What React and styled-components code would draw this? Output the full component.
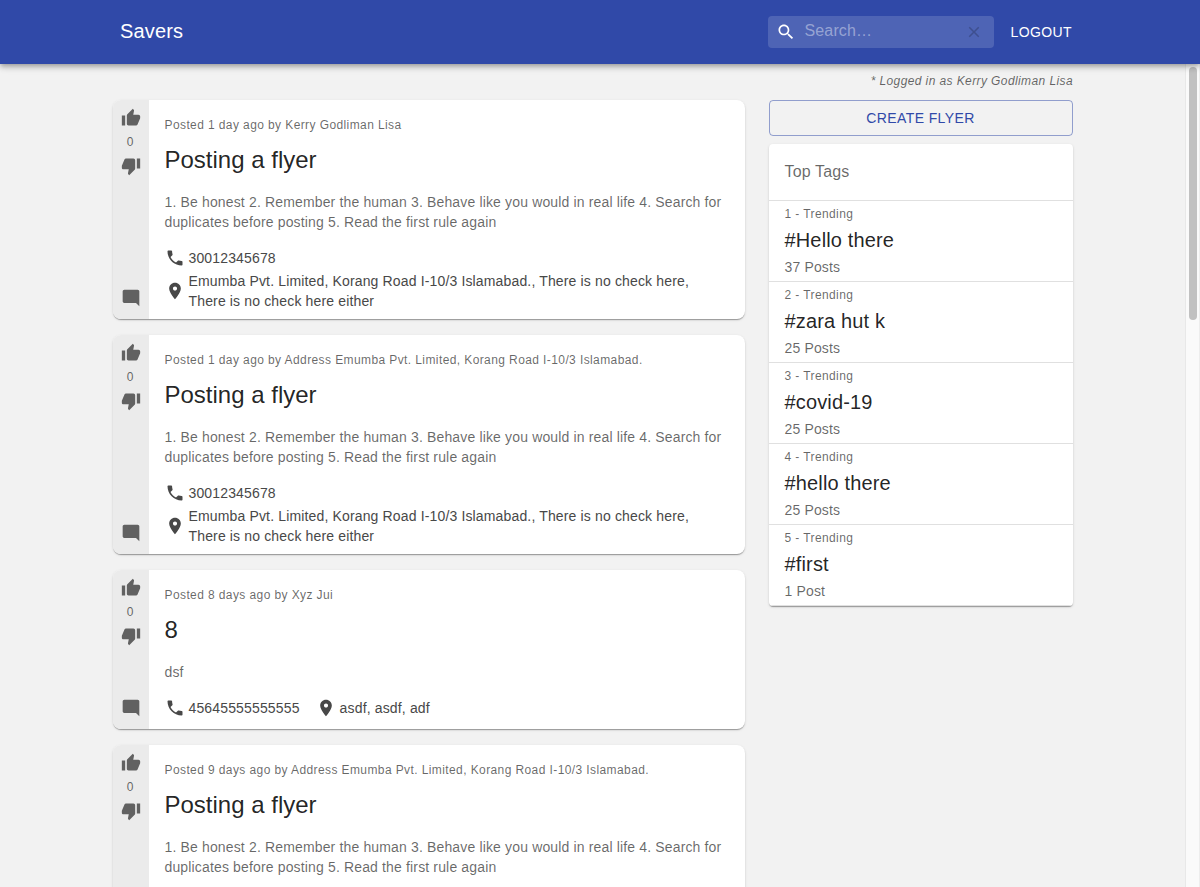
import React from "react";
import styled, { createGlobalStyle } from "styled-components";

const GlobalStyle = createGlobalStyle`
  *, *::before, *::after { box-sizing: border-box; }
  body {
    margin: 0;
    background: #f2f2f2;
    font-family: Helvetica, "Liberation Sans", Arial, sans-serif;
    color: rgba(0, 0, 0, 0.87);
    -webkit-font-smoothing: antialiased;
  }
`;

const Page = styled.div`
  height: 887px;
  display: flex;
  flex-direction: column;
  overflow: hidden;
`;

const AppBar = styled.header`
  flex: none;
  position: relative;
  z-index: 2;
  height: 64px;
  padding: 0 128px 0 120px;
  display: flex;
  align-items: center;
  background: #3049a8;
  color: #fff;
  box-shadow: 0 2px 4px -1px rgba(0, 0, 0, 0.2), 0 4px 5px 0 rgba(0, 0, 0, 0.14),
    0 1px 10px 0 rgba(0, 0, 0, 0.12);
`;

const Brand = styled.h1`
  flex: 1;
  margin: 0;
  padding-bottom: 2px;
  font-size: 20px;
  font-weight: 400;
  line-height: 32px;
  letter-spacing: 0.15px;
`;

const SearchBox = styled.div`
  width: 226px;
  height: 32px;
  padding: 0 11px 0 8px;
  display: flex;
  align-items: center;
  border-radius: 4px;
  background: rgba(255, 255, 255, 0.15);
`;

const Placeholder = styled.span`
  flex: 1;
  margin-left: 8px;
  padding-bottom: 2px;
  font-size: 16px;
  line-height: 24px;
  letter-spacing: 0.15px;
  color: rgba(255, 255, 255, 0.42);
`;

const LogoutButton = styled.button`
  margin-left: 16px;
  padding: 0;
  border: 0;
  background: none;
  color: inherit;
  font: inherit;
  font-size: 14px;
  line-height: 24px;
  letter-spacing: 0.4px;
`;

const Icon = styled.svg`
  flex: none;
  display: block;
  width: ${(p) => p.$size || 20}px;
  height: ${(p) => p.$size || 20}px;
  fill: ${(p) => p.$color || "currentColor"};
`;

const Body = styled.div`
  flex: 1;
  min-height: 0;
  display: flex;
`;

const Content = styled.main`
  flex: 1;
  padding-left: 113px;
  display: flex;
  gap: 24px;
  overflow: hidden;
`;

const Feed = styled.section`
  width: 632px;
  padding-top: 36px;
  display: flex;
  flex-direction: column;
  gap: 16px;
`;

const cardShadow = `0 2px 1px -1px rgba(0, 0, 0, 0.2), 0 1px 1px 0 rgba(0, 0, 0, 0.14),
  0 1px 3px 0 rgba(0, 0, 0, 0.12)`;

const FlyerCard = styled.article`
  flex: none;
  display: flex;
  border-radius: 8px;
  overflow: hidden;
  background: #fff;
  box-shadow: ${cardShadow};

  &:last-child {
    min-height: 219px;
  }
`;

const VoteRail = styled.div`
  width: 36px;
  padding: 8px 8px 11px;
  display: flex;
  flex-direction: column;
  background: #ebebeb;
  color: #616161;
`;

const VoteCount = styled.span`
  height: 28px;
  padding-right: 2px;
  text-align: center;
  font-size: 12px;
  line-height: 28px;
  color: rgba(0, 0, 0, 0.6);
`;

const Spacer = styled.div`
  flex: 1;
`;

const CardBody = styled.div`
  flex: 1;
  padding: 15px 16px 8px 15.5px;
`;

const Caption = styled.div`
  font-size: 12px;
  line-height: 20px;
  letter-spacing: 0.4px;
  color: rgba(0, 0, 0, 0.6);
`;

const Title = styled.h2`
  margin: 9px 0 16px;
  font-size: 24px;
  font-weight: 400;
  line-height: 32px;
`;

const Description = styled.p`
  margin: 0 0 14px;
  font-size: 14px;
  line-height: 20px;
  letter-spacing: 0.15px;
  color: rgba(0, 0, 0, 0.6);
`;

const Contacts = styled.div`
  display: flex;
  flex-wrap: wrap;
  column-gap: 16px;
  row-gap: 1px;
  padding-bottom: ${(p) => (p.$inline ? 1 : 0)}px;
`;

const Contact = styled.div`
  min-height: 24px;
  display: flex;
  align-items: center;
  gap: 4px;
  font-size: 14px;
  line-height: 20px;
  letter-spacing: 0.15px;
  color: #484848;
`;

const Sidebar = styled.aside`
  width: 304px;
  padding-top: 7px;
`;

const LoginNote = styled(Caption)`
  text-align: right;
  font-style: italic;
`;

const CreateButton = styled.button`
  width: 100%;
  height: 36px;
  margin: 9px 0 8px;
  padding: 0 7px 0 6px;
  border: 1px solid rgba(48, 73, 168, 0.5);
  border-radius: 4px;
  background: none;
  color: #3049a8;
  font: inherit;
  font-size: 14px;
  letter-spacing: 0.4px;
`;

const TagCard = styled.section`
  border-radius: 4px;
  overflow: hidden;
  background: #fff;
  box-shadow: ${cardShadow};
`;

const TagHeader = styled.div`
  height: 57px;
  padding: 16px 15.5px;
  border-bottom: 1px solid #e0e0e0;
  font-size: 16px;
  line-height: 24px;
  letter-spacing: 0.15px;
  color: rgba(0, 0, 0, 0.6);
`;

const TagRow = styled.div`
  height: 81px;
  padding: 3px 15.5px 0;
  border-bottom: 1px solid #e0e0e0;
`;

const TagName = styled.h3`
  margin: 0;
  font-size: 20px;
  font-weight: 400;
  line-height: 32px;
  letter-spacing: 0.15px;
`;

const TagCount = styled.div`
  font-size: 14px;
  line-height: 22px;
  letter-spacing: 0.15px;
  color: rgba(0, 0, 0, 0.6);
`;

const ScrollTrack = styled.div`
  width: 15px;
  padding: 3px 2px 0 3px;
  border-left: 1px solid #e8e8e8;
  border-right: 1px solid #ededed;
  background: #fafafa;
`;

const ScrollThumb = styled.div`
  width: 8px;
  height: 253px;
  border-radius: 4px;
  background: #c1c1c1;
`;

const paths = {
  search:
    "M15.5 14h-.79l-.28-.27C15.41 12.59 16 11.11 16 9.5 16 5.91 13.09 3 9.5 3S3 5.91 3 9.5 5.91 16 9.5 16c1.61 0 3.09-.59 4.23-1.57l.27.28v.79l5 4.99L20.49 19l-4.99-5zm-6 0C7.01 14 5 11.99 5 9.5S7.01 5 9.5 5 14 7.01 14 9.5 11.99 14 9.5 14z",
  clear:
    "M19 6.41L17.59 5 12 10.59 6.41 5 5 6.41 10.59 12 5 17.59 6.41 19 12 13.41 17.59 19 19 17.59 13.41 12z",
  up: "M1 21h4V9H1v12zm22-11c0-1.1-.9-2-2-2h-6.31l.95-4.57.03-.32c0-.41-.17-.79-.44-1.06L14.17 1 7.59 7.59C7.22 7.95 7 8.45 7 9v10c0 1.1.9 2 2 2h9c.83 0 1.54-.5 1.84-1.22l3.02-7.05c.09-.23.14-.47.14-.73v-2z",
  down: "M15 3H6c-.83 0-1.54.5-1.84 1.22l-3.02 7.05c-.09.23-.14.47-.14.73v2c0 1.1.9 2 2 2h6.31l-.95 4.57-.03.32c0 .41.17.79.44 1.06L9.83 23l6.59-6.59c.36-.36.58-.86.58-1.41V5c0-1.1-.9-2-2-2zm4 0v12h4V3h-4z",
  comment:
    "M21.99 4c0-1.1-.89-2-1.99-2H4c-1.1 0-2 .9-2 2v12c0 1.1.9 2 2 2h14l4 4-.01-18z",
  phone:
    "M6.62 10.79c1.44 2.83 3.76 5.14 6.59 6.59l2.2-2.2c.27-.27.67-.36 1.02-.24 1.12.37 2.33.57 3.57.57.55 0 1 .45 1 1V20c0 .55-.45 1-1 1-9.39 0-17-7.61-17-17 0-.55.45-1 1-1h3.5c.55 0 1 .45 1 1 0 1.25.2 2.45.57 3.57.11.35.03.74-.25 1.02l-2.2 2.2z",
  place:
    "M12 2C8.13 2 5 5.13 5 9c0 5.25 7 13 7 13s7-7.75 7-13c0-3.87-3.13-7-7-7zm0 9.5c-1.38 0-2.5-1.12-2.5-2.5s1.12-2.5 2.5-2.5 2.5 1.12 2.5 2.5-1.12 2.5-2.5 2.5z",
};

const Glyph = ({ name, size, color }) => (
  <Icon viewBox="0 0 24 24" $size={size} $color={color} aria-hidden="true">
    <path d={paths[name]} />
  </Icon>
);

const rules =
  "1. Be honest 2. Remember the human 3. Behave like you would in real life 4. Search for duplicates before posting 5. Read the first rule again";
const office =
  "Emumba Pvt. Limited, Korang Road I-10/3 Islamabad., There is no check here, There is no check here either";
const company = "Address Emumba Pvt. Limited, Korang Road I-10/3 Islamabad.";

const flyers = [
  { age: "1 day", author: "Kerry Godliman Lisa", title: "Posting a flyer", text: rules, phone: "30012345678", address: office },
  { age: "1 day", author: company, title: "Posting a flyer", text: rules, phone: "30012345678", address: office },
  { age: "8 days", author: "Xyz Jui", title: "8", text: "dsf", phone: "45645555555555", address: "asdf, asdf, adf", inline: true },
  { age: "9 days", author: company, title: "Posting a flyer", text: rules },
];

const tags = [
  { name: "#Hello there", posts: "37 Posts" },
  { name: "#zara hut k", posts: "25 Posts" },
  { name: "#covid-19", posts: "25 Posts" },
  { name: "#hello there", posts: "25 Posts" },
  { name: "#first", posts: "1 Post" },
];

const Flyer = ({ age, author, title, text, phone, address, inline }) => (
  <FlyerCard>
    <VoteRail>
      <Glyph name="up" />
      <VoteCount>0</VoteCount>
      <Glyph name="down" />
      <Spacer />
      <Glyph name="comment" />
    </VoteRail>
    <CardBody>
      <Caption>{`Posted ${age} ago by ${author}`}</Caption>
      <Title>{title}</Title>
      <Description>{text}</Description>
      {phone && (
        <Contacts $inline={inline}>
          <Contact>
            <Glyph name="phone" />
            <span>{phone}</span>
          </Contact>
          <Contact>
            <Glyph name="place" />
            <span>{address}</span>
          </Contact>
        </Contacts>
      )}
    </CardBody>
  </FlyerCard>
);

export default function App() {
  return (
    <Page>
      <GlobalStyle />
      <AppBar>
        <Brand>Savers</Brand>
        <SearchBox>
          <Glyph name="search" />
          <Placeholder>Search…</Placeholder>
          <Glyph name="clear" size={18} color="#3e4f8f" />
        </SearchBox>
        <LogoutButton>LOGOUT</LogoutButton>
      </AppBar>
      <Body>
        <Content>
          <Feed>
            {flyers.map((flyer, i) => (
              <Flyer key={i} {...flyer} />
            ))}
          </Feed>
          <Sidebar>
            <LoginNote>* Logged in as Kerry Godliman Lisa</LoginNote>
            <CreateButton>CREATE FLYER</CreateButton>
            <TagCard>
              <TagHeader>Top Tags</TagHeader>
              {tags.map((tag, i) => (
                <TagRow key={tag.name}>
                  <Caption>{`${i + 1} - Trending`}</Caption>
                  <TagName>{tag.name}</TagName>
                  <TagCount>{tag.posts}</TagCount>
                </TagRow>
              ))}
            </TagCard>
          </Sidebar>
        </Content>
        <ScrollTrack>
          <ScrollThumb />
        </ScrollTrack>
      </Body>
    </Page>
  );
}
